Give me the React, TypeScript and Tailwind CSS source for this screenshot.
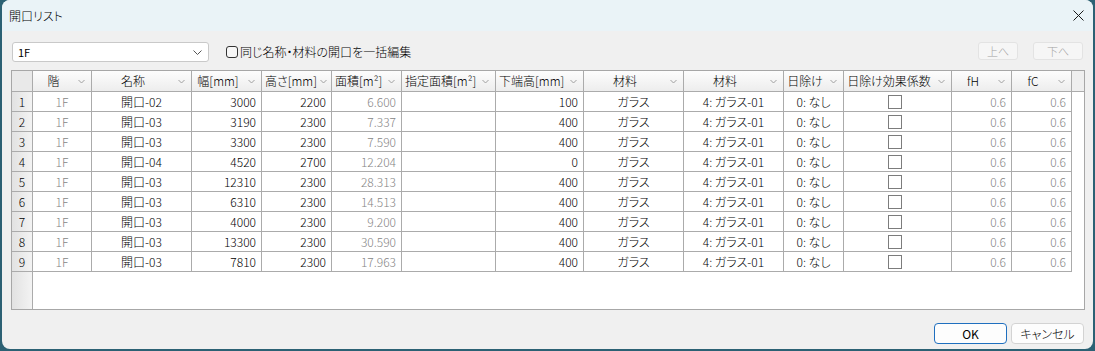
import React from "react";

type Col = {
  w: string;
  label: string;
  align: "left" | "center" | "right";
  gray?: boolean;
  checkbox?: boolean;
};

const cols: Col[] = [
  { w: "w-[59px]", label: "階", align: "center", gray: true },
  { w: "w-[100px]", label: "名称", align: "center" },
  { w: "w-[70px]", label: "幅[mm]", align: "right" },
  { w: "w-[70px]", label: "高さ[mm]", align: "right" },
  { w: "w-[70px]", label: "面積[m²]", align: "right", gray: true },
  { w: "w-[94px]", label: "指定面積[m²]", align: "right" },
  { w: "w-[88px]", label: "下端高[mm]", align: "right" },
  { w: "w-[100px]", label: "材料", align: "center" },
  { w: "w-[100px]", label: "材料", align: "center" },
  { w: "w-[60px]", label: "日除け", align: "center" },
  { w: "w-[108px]", label: "日除け効果係数", align: "center", checkbox: true },
  { w: "w-[60px]", label: "fH", align: "right", gray: true },
  { w: "w-[60px]", label: "fC", align: "right", gray: true },
];

const data: [string, string, string, string, string][] = [
  ["開口-02", "3000", "2200", "6.600", "100"],
  ["開口-03", "3190", "2300", "7.337", "400"],
  ["開口-03", "3300", "2300", "7.590", "400"],
  ["開口-04", "4520", "2700", "12.204", "0"],
  ["開口-03", "12310", "2300", "28.313", "400"],
  ["開口-03", "6310", "2300", "14.513", "400"],
  ["開口-03", "4000", "2300", "9.200", "400"],
  ["開口-03", "13300", "2300", "30.590", "400"],
  ["開口-03", "7810", "2300", "17.963", "400"],
];

function Chevron() {
  return (
    <svg width="7" height="5" viewBox="0 0 7 5" className="shrink-0">
      <path d="M0.5 1 L3.5 4 L6.5 1" fill="none" stroke="#a0a0a0" strokeWidth="1" />
    </svg>
  );
}

function HeaderCell({ col }: { col: Col }) {
  return (
    <div
      className={`${col.w} h-full shrink-0 flex items-center border-r border-[#ababab] bg-gradient-to-b from-[#fdfdfd] to-[#ededed]`}
    >
      <div className="flex-1 text-center text-[12px] text-black whitespace-nowrap pl-[3px]">{col.label}</div>
      <div className="w-[20px] flex justify-center">
        <Chevron />
      </div>
    </div>
  );
}

function Cell({ col, value }: { col: Col; value: string }) {
  const align =
    col.align === "center" ? "justify-center" : col.align === "right" ? "justify-end pr-[5px]" : "justify-start pl-[4px]";
  return (
    <div
      className={`${col.w} h-full shrink-0 flex items-center ${align} border-r border-[#ababab] ${
        col.gray ? "text-[#858585]" : "text-black"
      } text-[12px] whitespace-nowrap`}
    >
      {col.checkbox ? (
        <div className="w-[14px] h-[14px] border border-[#7c7c7c] bg-white mr-[6px]" />
      ) : (
        value
      )}
    </div>
  );
}

export default function App() {
  return (
    <div className="w-[1095px] h-[351px] bg-[#2c6174] overflow-hidden font-['Noto_Sans_CJK_JP',sans-serif] font-light [font-feature-settings:'palt']">
      <div className="ml-[2px] w-[1091px] h-[349px] rounded-[8px] overflow-hidden flex flex-col bg-[#f0f0f0]">
        {/* title bar */}
        <div className="h-[31px] shrink-0 bg-[#eaf3f7] flex items-center justify-between pl-[7px] pr-[9px]">
          <span className="text-[12px] text-black leading-none">開口リスト</span>
          <svg width="11" height="11" viewBox="0 0 11 11">
            <path d="M0.5 0.5 L10.5 10.5 M10.5 0.5 L0.5 10.5" stroke="#1a1a1a" strokeWidth="1" />
          </svg>
        </div>

        {/* body */}
        <div className="flex-1 flex flex-col pt-[11px]">
          {/* toolbar */}
          <div className="h-[20px] flex items-start pl-[10px] pr-[10px]">
            <div className="w-[197px] h-[20px] bg-white border border-[#c9c9c9] rounded-[3px] flex items-center justify-between pl-[5px] pr-[6px]">
              <span className="text-[11px] text-black leading-none font-normal">1F</span>
              <svg width="9" height="5" viewBox="0 0 9 5">
                <path d="M0.5 0.5 L4.5 4.5 L8.5 0.5" fill="none" stroke="#555" strokeWidth="1" />
              </svg>
            </div>
            <div className="ml-[17px] h-[20px] flex items-center">
              <div className="w-[12px] h-[12px] border border-[#333] rounded-[3px] bg-[#f7f7f7]" />
              <span className="ml-[2px] text-[12px] text-black leading-none">同じ名称・材料の開口を一括編集</span>
            </div>
            <div className="flex-1" />
            <div className="w-[40px] h-[18px] rounded-[3px] border border-[#e3e3e3] bg-[#f6f6f6] flex items-center justify-center text-[11px] text-[#a3a3a3] leading-none">
              上へ
            </div>
            <div className="ml-[15px] w-[50px] h-[18px] rounded-[3px] border border-[#e3e3e3] bg-[#f6f6f6] flex items-center justify-center text-[11px] text-[#a3a3a3] leading-none">
              下へ
            </div>
          </div>

          {/* grid */}
          <div className="ml-[9px] mt-[8px] w-[1074px] h-[240px] border border-[#a7a7a7] bg-white flex flex-col leading-none">
            {/* header */}
            <div className="h-[21px] shrink-0 flex border-b border-[#ababab]">
              <div className="w-[21px] h-full shrink-0 border-r border-[#ababab] bg-[#e9e9e9]" />
              {cols.map((c, i) => (
                <HeaderCell key={i} col={c} />
              ))}
              <div className="flex-1 h-full bg-[#efefef]" />
            </div>
            {/* rows */}
            {data.map((r, i) => {
              const values = [
                "1F",
                r[0],
                r[1],
                r[2],
                r[3],
                "",
                r[4],
                "ガラス",
                "4: ガラス-01",
                "0: なし",
                "",
                "0.6",
                "0.6",
              ];
              return (
                <div key={i} className="h-[20px] shrink-0 flex">
                  <div className="w-[21px] h-full shrink-0 border-r border-b border-[#ababab] bg-gradient-to-r from-[#e2e2e2] to-[#f3f3f3] flex items-center justify-center text-[12px] text-black">
                    {i + 1}
                  </div>
                  <div className="flex h-full border-b border-[#ababab]">
                    {cols.map((c, j) => (
                      <Cell key={j} col={c} value={values[j]} />
                    ))}
                  </div>
                  <div className="flex-1" />
                </div>
              );
            })}
            <div className="flex-1 flex">
              <div className="w-[21px] h-full shrink-0 border-r border-[#ababab] bg-gradient-to-r from-[#e2e2e2] to-[#f3f3f3]" />
              <div className="flex-1" />
            </div>
          </div>

          {/* footer buttons */}
          <div className="mt-[13px] flex justify-end pr-[9px]">
            <div className="w-[73px] h-[21px] rounded-[4px] border border-[#1f6fbf] bg-[#fdfdfd] flex items-center justify-center text-[12px] text-black leading-none font-normal">
              OK
            </div>
            <div className="ml-[4px] w-[73px] h-[21px] rounded-[4px] border border-[#d3d3d3] bg-[#fdfdfd] flex items-center justify-center text-[12px] text-black leading-none">
              キャンセル
            </div>
          </div>
        </div>
      </div>
    </div>
  );
}
